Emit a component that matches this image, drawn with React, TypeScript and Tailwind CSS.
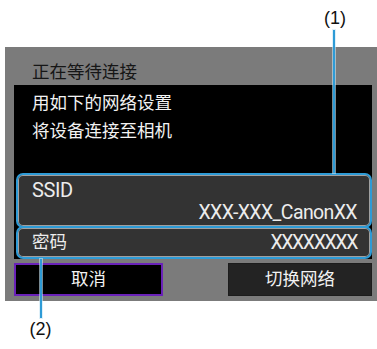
import React from "react";

const font = { fontFamily: 'Roboto, "Noto Sans CJK SC", sans-serif' };

export default function App() {
  return (
    <div className="relative w-[377px] h-[349px] bg-white overflow-hidden" style={font}>
      <div className="pt-[47px]">
        <div className="ml-[5px] w-[372px] h-[254px] bg-[#7b7b7b] pl-[9px] pr-[5px] flex flex-col">
          <div className="h-[38px] pt-[14px] pl-[18px] flex items-center text-[17.5px] leading-none text-[#161616]">
            正在等待连接
          </div>
          <div className="h-[174px] bg-black flex flex-col">
            <div className="pt-[4px] pl-[18px] text-[17.5px] leading-[28px] text-[#f2f2f2]">
              <div>用如下的网络设置</div>
              <div>将设备连接至相机</div>
            </div>
            <div className="mt-auto ml-[2px] flex flex-col">
              <div className="h-[55px] rounded-[7px] border-2 border-[#2e9bd6] bg-[#333333] shadow-[inset_0_0_0_1px_#a0a0a0] pl-[14px] pr-[13px] pt-[3px] text-[#ececec]">
                <div className="text-[20px] leading-[24px] tracking-[-0.4px]">SSID</div>
                <div className="text-right text-[19.5px] leading-[22px] tracking-[-0.6px]">XXX-XXX_CanonXX</div>
              </div>
              <div className="-mt-[2px] h-[33px] rounded-[7px] border-2 border-[#2e9bd6] bg-[#333333] shadow-[inset_0_0_0_1px_#a0a0a0] pl-[14px] pr-[13px] flex items-center justify-between text-[#ececec]">
                <span className="text-[17.5px] leading-none">密码</span>
                <span className="text-[19.5px] leading-none tracking-[-1.4px]">XXXXXXXX</span>
              </div>
            </div>
          </div>
          <div className="mt-[4px] flex justify-between">
            <div className="w-[149px] h-[33px] bg-black border-2 border-[#6a22b8] flex items-center justify-center text-[17.5px] leading-none text-[#f2f2f2]">
              取消
            </div>
            <div className="w-[144px] h-[33px] bg-[#232323] border border-[#1c1c1c] flex items-center justify-center text-[17.5px] leading-none text-[#f2f2f2]">
              切换网络
            </div>
          </div>
        </div>
      </div>

      {/* callout (1) */}
      <div
        className="absolute left-[322px] top-[7px] w-[26px] text-center text-[18px] leading-[22px] text-[#111]"
        style={{ fontFamily: '"Liberation Sans", Arial, sans-serif' }}
      >
        (1)
      </div>
      <div className="absolute left-[333px] top-[30px] w-[2px] h-[143px] bg-[#2e9bd6] shadow-[0_0_0_1px_rgba(200,230,245,0.6)]" />

      {/* callout (2) */}
      <div className="absolute left-[40px] top-[259px] w-[2px] h-[59px] bg-[#2e9bd6] shadow-[0_0_0_1px_rgba(200,230,245,0.6)]" />
      <div
        className="absolute left-[27px] top-[318px] w-[27px] text-center text-[18px] leading-[22px] text-[#111]"
        style={{ fontFamily: '"Liberation Sans", Arial, sans-serif' }}
      >
        (2)
      </div>
    </div>
  );
}
